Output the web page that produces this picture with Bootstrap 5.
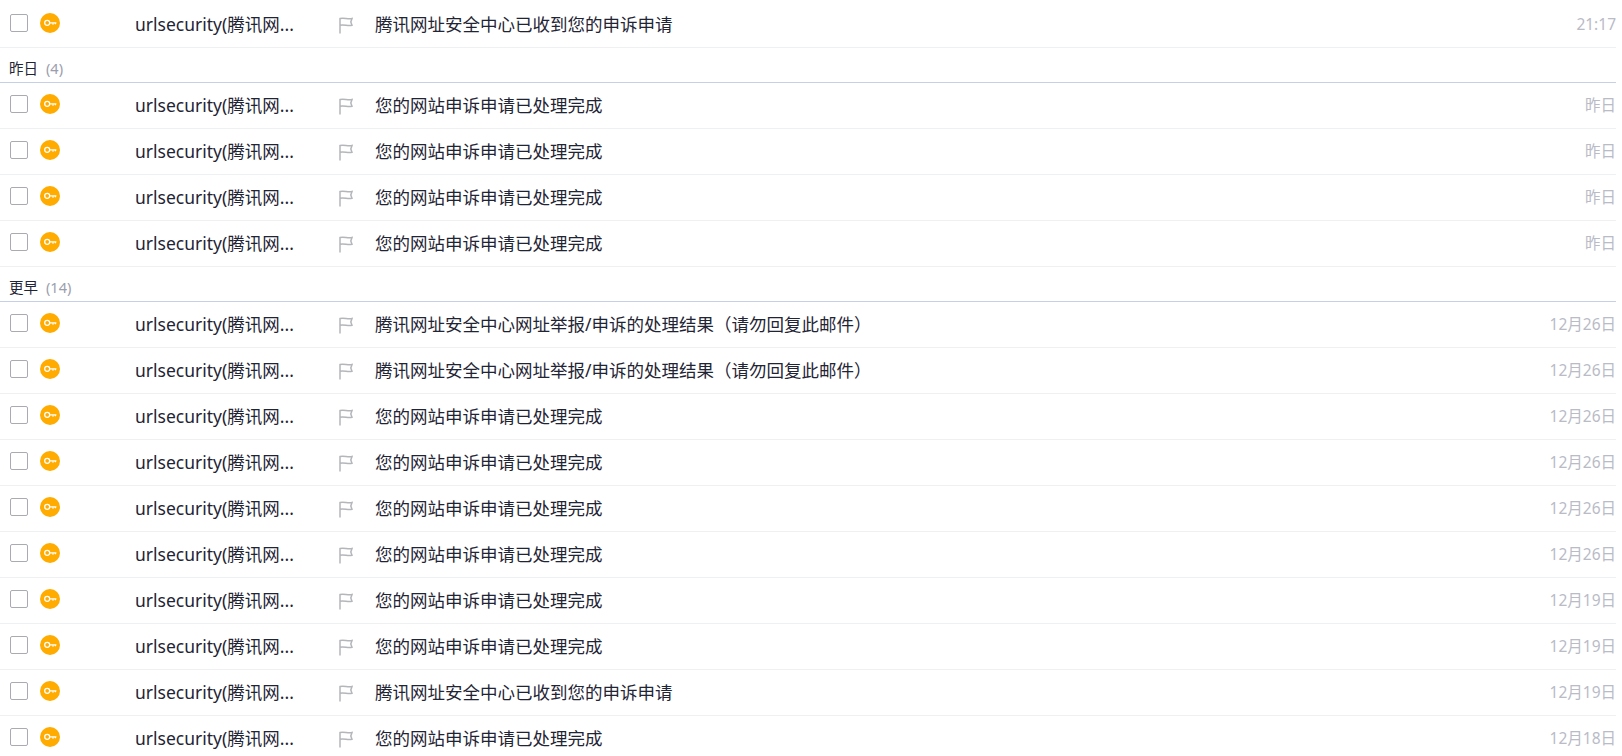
<!DOCTYPE html>
<html lang="zh-CN">
<head>
<meta charset="utf-8">
<title>邮件列表</title>
<link href="https://cdn.jsdelivr.net/npm/bootstrap@5.3.0/dist/css/bootstrap.min.css" rel="stylesheet">
<style>
html,body{height:756px;overflow:hidden;background:#fff}
body{font-family:"Noto Sans","Noto Sans CJK SC",sans-serif;color:#1f2535}
.mail-list{margin-top:2px;padding-right:6px}
.mail-row{height:46px;border-bottom:1px solid #eff0f2;font-size:17.5px;line-height:24px;padding-left:10px}
.mail-check{width:18px;height:18px;border:1.5px solid #a9abb0;border-radius:2px;margin-top:12px;flex:none}
.mail-key{width:20px;height:20px;margin-left:12px;margin-top:11px;flex:none}
.mail-sender{width:200px;margin-left:75px;padding-top:10px;white-space:nowrap;flex:none}
.mail-flag{width:14px;height:17px;margin-top:15px;margin-left:4px;flex:none}
.mail-subject{margin-left:22px;padding-top:10px;white-space:nowrap;flex:1 1 auto}
.mail-time{font-size:15.5px;color:#b9bbc6;padding-top:10px;white-space:nowrap}
.mail-group{height:35px;border-bottom:1px solid #c5cfe8;font-size:14.5px;line-height:20px;padding:10px 0 0 9px;color:#1f2535}
.mail-count{color:#9b9eae;margin-left:8px}
</style>
</head>
<body>
<svg width="0" height="0" class="d-block" aria-hidden="true">
<defs>
<symbol id="ikey" viewBox="0 0 20 20"><circle cx="10" cy="10" r="10" fill="#ffab00"/><circle cx="7.2" cy="9.8" r="2.5" fill="none" stroke="#fff" stroke-width="1.3"/><path d="M9.8 9.8h6.6M13 9.8v2M15.4 9.8v1.5" fill="none" stroke="#fff" stroke-width="1.2"/></symbol>
<symbol id="iflag" viewBox="0 0 14 17"><path d="M1 16.5V1.5c4-1 8 1 12 0l-1.2 3.4 1.2 3.4c-4 1-8-1-12 0" fill="none" stroke="#b4b6ba" stroke-width="1.5"/></symbol>
</defs>
</svg>
<div class="mail-list" id="list">
<div class="mail-row d-flex"><span class="mail-check"></span><svg class="mail-key"><use href="#ikey"/></svg><span class="mail-sender">urlsecurity(腾讯网...</span><svg class="mail-flag"><use href="#iflag"/></svg><span class="mail-subject">腾讯网址安全中心已收到您的申诉申请</span><span class="mail-time">21:17</span></div>
<div class="mail-group">昨日<span class="mail-count">(4)</span></div>
<div class="mail-row d-flex"><span class="mail-check"></span><svg class="mail-key"><use href="#ikey"/></svg><span class="mail-sender">urlsecurity(腾讯网...</span><svg class="mail-flag"><use href="#iflag"/></svg><span class="mail-subject">您的网站申诉申请已处理完成</span><span class="mail-time">昨日</span></div>
<div class="mail-row d-flex"><span class="mail-check"></span><svg class="mail-key"><use href="#ikey"/></svg><span class="mail-sender">urlsecurity(腾讯网...</span><svg class="mail-flag"><use href="#iflag"/></svg><span class="mail-subject">您的网站申诉申请已处理完成</span><span class="mail-time">昨日</span></div>
<div class="mail-row d-flex"><span class="mail-check"></span><svg class="mail-key"><use href="#ikey"/></svg><span class="mail-sender">urlsecurity(腾讯网...</span><svg class="mail-flag"><use href="#iflag"/></svg><span class="mail-subject">您的网站申诉申请已处理完成</span><span class="mail-time">昨日</span></div>
<div class="mail-row d-flex"><span class="mail-check"></span><svg class="mail-key"><use href="#ikey"/></svg><span class="mail-sender">urlsecurity(腾讯网...</span><svg class="mail-flag"><use href="#iflag"/></svg><span class="mail-subject">您的网站申诉申请已处理完成</span><span class="mail-time">昨日</span></div>
<div class="mail-group">更早<span class="mail-count">(14)</span></div>
<div class="mail-row d-flex"><span class="mail-check"></span><svg class="mail-key"><use href="#ikey"/></svg><span class="mail-sender">urlsecurity(腾讯网...</span><svg class="mail-flag"><use href="#iflag"/></svg><span class="mail-subject">腾讯网址安全中心网址举报/申诉的处理结果（请勿回复此邮件）</span><span class="mail-time">12月26日</span></div>
<div class="mail-row d-flex"><span class="mail-check"></span><svg class="mail-key"><use href="#ikey"/></svg><span class="mail-sender">urlsecurity(腾讯网...</span><svg class="mail-flag"><use href="#iflag"/></svg><span class="mail-subject">腾讯网址安全中心网址举报/申诉的处理结果（请勿回复此邮件）</span><span class="mail-time">12月26日</span></div>
<div class="mail-row d-flex"><span class="mail-check"></span><svg class="mail-key"><use href="#ikey"/></svg><span class="mail-sender">urlsecurity(腾讯网...</span><svg class="mail-flag"><use href="#iflag"/></svg><span class="mail-subject">您的网站申诉申请已处理完成</span><span class="mail-time">12月26日</span></div>
<div class="mail-row d-flex"><span class="mail-check"></span><svg class="mail-key"><use href="#ikey"/></svg><span class="mail-sender">urlsecurity(腾讯网...</span><svg class="mail-flag"><use href="#iflag"/></svg><span class="mail-subject">您的网站申诉申请已处理完成</span><span class="mail-time">12月26日</span></div>
<div class="mail-row d-flex"><span class="mail-check"></span><svg class="mail-key"><use href="#ikey"/></svg><span class="mail-sender">urlsecurity(腾讯网...</span><svg class="mail-flag"><use href="#iflag"/></svg><span class="mail-subject">您的网站申诉申请已处理完成</span><span class="mail-time">12月26日</span></div>
<div class="mail-row d-flex"><span class="mail-check"></span><svg class="mail-key"><use href="#ikey"/></svg><span class="mail-sender">urlsecurity(腾讯网...</span><svg class="mail-flag"><use href="#iflag"/></svg><span class="mail-subject">您的网站申诉申请已处理完成</span><span class="mail-time">12月26日</span></div>
<div class="mail-row d-flex"><span class="mail-check"></span><svg class="mail-key"><use href="#ikey"/></svg><span class="mail-sender">urlsecurity(腾讯网...</span><svg class="mail-flag"><use href="#iflag"/></svg><span class="mail-subject">您的网站申诉申请已处理完成</span><span class="mail-time">12月19日</span></div>
<div class="mail-row d-flex"><span class="mail-check"></span><svg class="mail-key"><use href="#ikey"/></svg><span class="mail-sender">urlsecurity(腾讯网...</span><svg class="mail-flag"><use href="#iflag"/></svg><span class="mail-subject">您的网站申诉申请已处理完成</span><span class="mail-time">12月19日</span></div>
<div class="mail-row d-flex"><span class="mail-check"></span><svg class="mail-key"><use href="#ikey"/></svg><span class="mail-sender">urlsecurity(腾讯网...</span><svg class="mail-flag"><use href="#iflag"/></svg><span class="mail-subject">腾讯网址安全中心已收到您的申诉申请</span><span class="mail-time">12月19日</span></div>
<div class="mail-row d-flex"><span class="mail-check"></span><svg class="mail-key"><use href="#ikey"/></svg><span class="mail-sender">urlsecurity(腾讯网...</span><svg class="mail-flag"><use href="#iflag"/></svg><span class="mail-subject">您的网站申诉申请已处理完成</span><span class="mail-time">12月18日</span></div>
</div>
<script src="https://cdn.jsdelivr.net/npm/bootstrap@5.3.0/dist/js/bootstrap.bundle.min.js"></script>
</body>
</html>
